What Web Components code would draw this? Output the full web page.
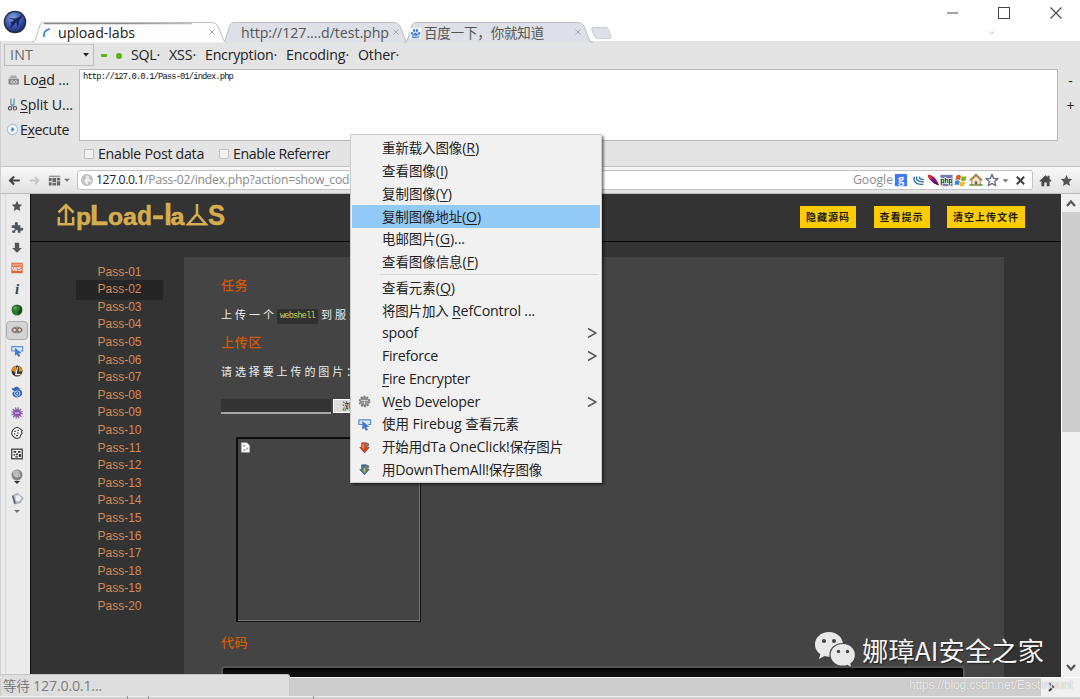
<!DOCTYPE html>
<html lang="zh-CN">
<head>
<meta charset="utf-8">
<title>upload-labs</title>
<style>
html,body{margin:0;padding:0}
body{width:1080px;height:699px;overflow:hidden;background:#fff;color:#222;font:14.2px/18px "Open Sans","Noto Sans CJK SC",sans-serif}
</style>
</head>
<body>
<browser-window></browser-window>
<script>
const CJK=/[\u3000-\u9fff\uff00-\uffef]+/g;
const mix=s=>s.replace(CJK,m=>`<span class="c">${m}</span>`);
const define=(name,html,after)=>customElements.define(name,class extends HTMLElement{
  connectedCallback(){
    if(this.shadowRoot)return;
    const t=document.createElement('template');
    t.innerHTML=typeof html==='function'?html(this):html;
    this.attachShadow({mode:'open'}).append(t.content.cloneNode(true));
    if(after)after(this);
  }
});

/* A label whose tracking is adjusted to a requested width */
define('fit-label',el=>`<style>
:host{display:inline-block;white-space:nowrap;flex:none;width:${el.getAttribute('w')}px}
span{display:inline-block;white-space:pre}
.c{display:inline;font-size:var(--cjk,.95em)}
u{text-decoration-thickness:1px;text-underline-offset:2px}
</style><span id="s">${mix(el.innerHTML)}</span>`,el=>{
  const s=el.shadowRoot.getElementById('s');
  const w=s.getBoundingClientRect().width;
  if(w)s.style.letterSpacing=((+el.getAttribute('w')-w)/s.textContent.length)+'px';
});

const ICONS={
star:'<path fill="#555" d="M8 2l1.800 4 4.200.5-3.100 3 .8 4.300L8 11.700 4.300 13.800l.8-4.300L2 6.500 6.200 6z"/>',
puzzle:'<path fill="#4c5760" d="M2 6h3.500V4.500a1.800 1.800 0 1 1 3.500 0V6h3v3h1a1.600 1.600 0 1 1 0 3h-1v2.500H9V13a1.400 1.400 0 0 0-3 0v1.500H2.500V12H4a1.400 1.400 0 0 0 0-3H2z"/>',
down:'<path fill="#555" d="M5.500 2h5v6H13.500L8 13.500 2.500 8h3z"/>',
ws:'<rect x="1.500" y="2" width="13" height="12" fill="#e0643c"/><path fill="#ee9b7c" d="M2 3h12v3H2z"/><text x="8" y="11" text-anchor="middle" font-family="Liberation Sans" font-weight="bold" font-size="7" fill="#fff">WS</text>',
info:'<text x="8" y="13.500" text-anchor="middle" font-family="Liberation Serif" font-weight="bold" font-style="italic" font-size="17" fill="#34434e">i</text>',
green:'<circle cx="8" cy="8" r="6.300" fill="#2c7a31"/><path d="M7 3c5 0 6 4 3 6s1 3-2 4c6 1 7-7 4-10" fill="#174a1c"/><circle cx="6" cy="6" r="2" fill="#54a354"/>',
mask:'<ellipse cx="8" cy="8" rx="6.500" ry="4" fill="#9c9083"/><circle cx="5.200" cy="8" r="2.200" fill="#ded4c8" stroke="#62564b"/><circle cx="10.800" cy="8" r="2.200" fill="#ded4c8" stroke="#62564b"/>',
bug:'<path d="M6 8H2V3h12.500V8H12" fill="#dbe9fb" stroke="#5b8fd8" stroke-width="1.300"/><path d="M6 5l6.500 5-3 .300 1.800 3.200-1.800.8-1.700-3.300L6 13z" fill="#3b7be0" stroke="#2b58a6" stroke-width=".5"/>',
orange:'<circle cx="8" cy="8" r="6.300" fill="#33302b"/><path d="M2 7.500A6 6 0 0 1 7 2v8z" fill="#e98b22"/><path d="M9.500 2.200A6 6 0 0 1 14 8l-3.500 1z" fill="#e98b22"/><path d="M8 3l1 1-1.300 7H12v1.800H5.500z" fill="#f7efe2"/>',
swirl:'<path d="M2 3c4 2 2-1 6-1 2 0 1 2 4 2-1 2-2 1-3 1 5 0 6 4 4 7-3 3.500-9 2.500-10-1C2 9 4 7 6 7 4 6 2 6 2 3z" fill="#3566b8"/><circle cx="8.300" cy="9.800" r="3" fill="none" stroke="#cfe0fa"/><circle cx="8.300" cy="9.800" r="1.100" fill="#cfe0fa"/>',
virus:'<circle cx="8" cy="8" r="4.600" fill="#8a57ad"/><circle cx="8" cy="8" r="5.600" fill="none" stroke="#8a62ab" stroke-width="2" stroke-dasharray="1.400 1.530"/><path d="M5.500 8h5" stroke="#e0c8ee" stroke-width="1.300"/>',
cookie:'<path d="M11.500 3A6 6 0 1 0 11.500 13l.5-2.500 2-2-1-2 1-1.500z" fill="#f8f8f8" stroke="#3f3f3f" stroke-width="1.200"/><path d="M5 6h2M8.500 5h1.500M4.500 9h1.500M8 8h2M7 11h2" stroke="#333" stroke-width="1.400"/>',
grid:'<rect x="2" y="2.500" width="12" height="11" fill="#fff" stroke="#333" stroke-width="1.400"/><path d="M4 4.500h3v2H4zM9 4.500h3v2H9zM4 8h1.500v2H4zM6.500 7.500h2.500v2H6.500zM10 8h2.500v3.500H10zM6 10.500h3v1.500H6z" fill="#333"/>',
ball:'<circle cx="8" cy="8" r="6.300" fill="#858585"/><ellipse cx="7" cy="5.200" rx="4" ry="2.500" fill="#b8b8b8"/><path d="M4 8h2v2M7 7v3h2V7M11 7v3" stroke="#e4e4e4" fill="none"/>',
eraser:'<path d="M2.500 5L8 2.500 14 7.500 11 12.500l-6.500 1.500z" fill="#b8bcc8" stroke="#9a9eaa" stroke-width=".8"/><path d="M3 5l2.500 8.500" stroke="#555b66" stroke-width="1.500"/><path d="M6 5l4-.5 2 3-2 3.500-4-1z" fill="#eef0f7"/>',
gear:'<circle cx="8" cy="8" r="5" fill="#8c8c8c"/><circle cx="8" cy="8" r="5.400" fill="none" stroke="#777" stroke-width="1.600" stroke-dasharray="2 1.390"/><path d="M4.500 7h7M8 8v3M5.500 9.500h1M10 9.500h1" stroke="#e0e0e0"/>',
dred:'<path fill="#d7401f" stroke="#7e2c1a" stroke-width=".7" d="M5 3h5v5h3l-5 5.500L3 8h2z"/><path fill="#f6a13a" d="M6 4h1.500v6L5 8h1z"/><circle cx="10.800" cy="5" r="2.200" fill="#777"/>',
dblue:'<path fill="#3c7896" stroke="#345264" stroke-width=".7" d="M5 3h5v5h3l-5 5.500L3 8h2z"/><path fill="#d9bb3d" d="M7 6h2v6L6 9h1z"/><circle cx="10.800" cy="5" r="2.200" fill="#777"/>',
paw:'<rect width="16" height="16" rx="1" fill="#fff"/><g fill="#3f7ee8"><ellipse cx="3" cy="7.500" rx="1.700" ry="2.200"/><ellipse cx="6" cy="3.500" rx="1.700" ry="2.400"/><ellipse cx="10.200" cy="3.500" rx="1.700" ry="2.400"/><ellipse cx="13.200" cy="7.500" rx="1.700" ry="2.200"/><path d="M8 6.700c2 0 2.500 2.300 4.300 3.800 1.500 1.500.5 4.500-1.500 4.400H5.200c-2.200 0-3-2.900-1.500-4.400C5.500 9 6 6.700 8 6.700z"/></g><path d="M5.500 11h1.500v2H5.500zM9 10.500V13h2v-2.500" fill="none" stroke="#fff" stroke-width=".9"/>',
google:'<rect x="1" y="1" width="14" height="14" rx="1" fill="#4078f0"/><text x="8" y="11" text-anchor="middle" font-family="Liberation Serif" font-weight="bold" font-size="14" fill="#fff">g</text>',
jq:'<g fill="none" stroke="#2673a8" stroke-width="1.700"><path d="M3 3.500c-2 5 2 10.500 11 9"/><path d="M6 3c-1.500 4 1.500 7.500 8.500 6.500"/><path d="M9.500 3c-.8 2 1 4.200 5 3.600"/></g>',
feather:'<path d="M1 1c6 0 11 5 14 13C9 12.500 2 8 1 1z" fill="#93117b"/><path d="M1 1c3 0 5 2 6 3L4 7C2 5 1 3 1 1z" fill="#d93028"/><path d="M9 8l6 6C10 12.500 8 11 7 10z" fill="#49156b"/>',
php:'<rect x=".5" y="1" width="15" height="14" fill="#777bb3"/><text x="8" y="10.500" text-anchor="middle" font-family="Liberation Sans" font-weight="bold" font-size="8" fill="#111" stroke="#fff" stroke-width="1.600" paint-order="stroke">php</text>',
win:'<path d="M3 2q3-2 5.500 0L7.500 7.500q-3-1.500-6 0z" fill="#dd5a24"/><path d="M9.500 2.500q2.500 1.500 6 .2l-1.500 5.500q-2.500 1-5.600-.3z" fill="#86b32d"/><path d="M1.300 8.500q3-1.500 5.900 0l-1.200 5.300q-2.700-1.800-5.500 0z" fill="#3c83cf"/><path d="M8 9.200q3 1.300 5.800.2l-1.500 5.500q-3 1-5.600-.4z" fill="#f4bd2f"/>',
house:'<path d="M3 8v6h10V8L8 3.500z" fill="#eee5d2" stroke="#9a8761"/><path d="M1 8.500L8 2l7 6.500" fill="none" stroke="#b57b42" stroke-width="1.900"/><path d="M6.500 14V9.500h3V14" fill="#8a6944"/><path d="M.500 13.500h5M10.500 13.500h5" stroke="#68a342" stroke-width="2"/>',
ostar:'<path fill="#fff" stroke="#5c6680" stroke-width="1.400" d="M8 1.800l1.900 4.300 4.700.5-3.500 3.100 1 4.600L8 12l-4.100 2.300 1-4.600-3.500-3.100 4.700-.5z"/>',
close:'<path d="M3.500 3.500l9 9M12.500 3.500l-9 9" stroke="#444" stroke-width="2.600"/>',
home:'<path fill="#4a4a4a" d="M.5 8.500L8 1.500l2.500 2.300V2h2.500v4L15.500 8.500l-1 1L13 8.500V15H9.500v-4.500h-3V15H3V8.500l-1.500 1z"/>',
back:'<path d="M14.500 8H3M7.500 3L2.500 8l5 5" fill="none" stroke="#444" stroke-width="2.600"/>',
fwd:'<path d="M2 8h11M8.500 3.500L13 8l-4.500 4.500" fill="none" stroke="#c4c4c4" stroke-width="2.200"/>',
tiles:'<path d="M1 2h14v2H1z" fill="#999"/><path d="M1 5h3.500v4H1zM5.500 5H10v5H5.500zM11 5h4v3h-4zM1 10h3.500v4H1zM5.500 11H10v3H5.500zM11 9h4v5h-4z" fill="#666"/>',
globe:'<circle cx="8" cy="8" r="6" fill="#eee" stroke="#b9b9b9" stroke-width="1.500"/><path d="M3 4c3-2 5 0 4 2S4 7 5 9s2 2 1 4C3 12 2 8 3 4zM10 3c3 1 4 3 3.500 5C12 9 11 7 10 6zM9 10c2-1 3 0 3 1l-3 2.500z" fill="#c0c0c0"/>',
load:'<path d="M3 6l2-3h6l1.500 3v2H3z" fill="#aaa"/><rect x="2" y="6.500" width="12.500" height="7.500" rx="1" fill="#7c7c7c"/><path d="M2 7h12" stroke="#ddd"/><circle cx="6.300" cy="11" r="1.700" fill="none" stroke="#eee"/><circle cx="10.800" cy="11" r="1.700" fill="none" stroke="#eee"/>',
split:'<path d="M6 1v6.500l3.500 3M10 1v6.500l-3.500 3" stroke="#71a3ae" stroke-width="1.800" fill="none"/><circle cx="5" cy="12.700" r="2.100" fill="none" stroke="#555" stroke-width="1.300"/><circle cx="11" cy="12.700" r="2.100" fill="none" stroke="#555" stroke-width="1.300"/>',
exec:'<circle cx="8" cy="8" r="6.300" fill="#f3f8fd" stroke="#a9c2dc" stroke-width="1.300"/><path d="M6.800 5L10.500 8l-3.700 3z" fill="#2876c9"/>',
broken:'<path d="M2 1h8l4 4v10H2z" fill="#fff" stroke="#aaa"/><path d="M4 4h4v3H4zM9 8h3v3H9zM5 10h3v3H5z" fill="#a5b5a8"/>',
caret:'<path d="M3.500 6h9l-4.500 5z" fill="#777"/>'
};
define('ui-icon',el=>{const s=el.getAttribute('s')||15;return `<style>:host{display:block;flex:none;width:${s}px;height:${s}px}svg{display:block}</style><svg width="${s}" height="${s}" viewBox="0 0 16 16">${ICONS[el.getAttribute('n')]}</svg>`});

define('app-orb',`<style>:host{display:block;width:24px;height:24px}svg{display:block}</style>
<svg width="24" height="24" viewBox="0 0 24 24"><defs><radialGradient id="g" cx=".4" cy=".3" r=".7"><stop offset="0" stop-color="#8aa2e2"/><stop offset=".55" stop-color="#3f5cb8"/><stop offset="1" stop-color="#1b2f78"/></radialGradient></defs><circle cx="12" cy="12" r="11.300" fill="#252c40"/><circle cx="12" cy="12" r="10" fill="url(#g)"/><path d="M5 19C9 16 9 13 7 12c2 0 3-1 4-2-2-1-4-1-5-2 3 0 6 1 8 0s4-2 5-4c0 3-1 5-3 7 0 2 0 4-2 6 0-2 0-4-1-5-1 3-4 5-8 7z" fill="#17275f"/></svg>`);

define('browser-tab',el=>{
  const w=+el.getAttribute('w'),a=el.hasAttribute('active');
  return `<style>
:host{display:flex;position:relative;width:${w}px;height:21px;flex:none;align-items:center;color:${a?'#222':'#555'};z-index:${a?1:0}}
.bg{position:absolute;left:0;top:0}
.in{display:flex;align-items:center;position:relative;width:100%;gap:3px;padding:1px 0 0 var(--lead,0)}
.x{margin:-2px var(--tail,14px) 0 auto;width:6px;height:6px}
</style><svg class="bg" width="${w}" height="21"><path d="M0 20.500Q3 20 4 16L8 3Q9 .5 12 .5H${w-18}Q${w-14} .5 ${w-12} 4L${w-7} 17Q${w-6} 20 ${w-3} 20.500" fill="${a?'#fdfdfd':'#dde0e6'}" stroke="#bcbfc4"/>${a?'<defs><linearGradient id="l"><stop offset=".5" stop-color="#888"/><stop offset="1" stop-color="#888" stop-opacity=".5"/></linearGradient></defs><path d="M12 1h148v1.200H12z" fill="url(#l)"/>':''}</svg>
<div class="in"><slot></slot><svg class="x" viewBox="0 0 6 6"><path d="M.500.500l5 5M5.500.500l-5 5" stroke="#aaa"/></svg></div>`});

define('title-bar',`<style>
:host{display:flex;height:41px;background:#fff;position:relative;z-index:2}
app-orb{margin:10px 0 0 3px}
.tabs{display:flex;margin:22px 0 0 5px}
.new{display:block;margin:5px 0 0 -5px}
browser-tab+browser-tab{margin-left:-8px}
.sys{margin-left:auto;width:141px;display:flex;flex-direction:column}
.b{display:flex;align-items:flex-start;gap:38px;padding:7px 0 0 8px}
.b svg,.sys>svg{display:block}
.sys>svg{margin:12px 0 0 49px}
.spin{width:8px;height:10px;flex:none}
</style>
<app-orb></app-orb>
<div class="tabs">
<browser-tab active w="198" style="--lead:11px;--tail:15px"><svg class="spin" viewBox="0 0 8 10"><path d="M1 9Q0 2 7 1" fill="none" stroke="#2d7bd2" stroke-width="1.600"/></svg><fit-label w="77" style="margin-left:4px">upload-labs</fit-label></browser-tab>
<browser-tab w="190" style="--lead:19px;--tail:13px"><fit-label w="148">http://127....d/test.php</fit-label></browser-tab>
<browser-tab w="192" style="--lead:6px;--tail:15px"><ui-icon n="paw" s="11"></ui-icon><fit-label w="120">百度一下，你就知道</fit-label></browser-tab>
<svg class="new" width="22" height="13"><path d="M2 .5h13q2 0 3 3l2 6q0 2-2 2H7q-3 0-4-3L1 3Q0 .5 2 .5z" fill="#dde0e6" stroke="#c9ccd1"/></svg>
</div>
<div class="sys"><div class="b"><svg width="11" height="12"><path d="M0 6h11" stroke="#444"/></svg><svg width="12" height="12" style="margin-left:2px"><rect x=".5" y=".5" width="11" height="11" fill="none" stroke="#444"/></svg><svg width="12" height="12" style="margin-left:2px"><path d="M.500.500l11 11M11.500.500l-11 11" stroke="#444" stroke-width="1.100"/></svg></div>
<svg width="7" height="4"><path d="M1 .5l2.500 2.500L6 .5" fill="none" stroke="#bbb"/></svg></div>`);

define('hack-bar',`<style>
:host{display:grid;grid-template-rows:27px 73px 25px;height:125px;background:#e4e4e4;border-left:1px solid #cfcfcf;box-sizing:border-box;color:#222}
.m{display:flex;align-items:center;padding-left:3px}
.sel{box-sizing:border-box;width:90px;height:22px;margin-top:1px;border:1px solid #bcbcbc;border-top-color:#ccc;display:flex;align-items:center;justify-content:space-between;padding:0 4px 0 5px;color:#666;background:#e6e6e6}
.g{display:block;margin:2px 0 0 7px}
.m>fit-label{margin:0 0 0 9px}
.mid{display:grid;grid-template-columns:78px 979px 22px}
.l{display:flex;flex-direction:column;margin-top:-1px}
.l div{height:25px;display:flex;align-items:center;padding-left:6px;gap:3px}
.ta{background:#fff;border:1px solid #b9b9b9;box-sizing:border-box;height:72px;margin-top:1px;padding:2px 3px;font:8.800px/11px "Liberation Mono",monospace;color:#111}
.pm{display:grid;grid-template-rows:25px 25px;justify-items:center;align-items:center;padding-left:3px;font-size:14px}
.f{display:flex;align-items:center;padding-left:83px}
.cb{width:10px;height:10px;box-sizing:border-box;border:1px solid #c0c0c0;background:#f2f2f2;border-radius:1px;margin:1px 4px 0 0}
.f fit-label{margin-top:1px}
</style>
<div class="m"><div class="sel"><fit-label w="23">INT</fit-label><svg width="6" height="4"><path d="M0 0h6L3 3.500z" fill="#222"/></svg></div>
<svg class="g" width="22" height="8"><rect x="0" y="2" width="6" height="3" rx="1.300" fill="#54b80f"/><circle cx="18" cy="4" r="3" fill="#54b80f"/></svg>
<fit-label w="29" style="margin-left:8px">SQL·</fit-label><fit-label w="27">XSS·</fit-label><fit-label w="72">Encryption·</fit-label><fit-label w="63">Encoding·</fit-label><fit-label w="41">Other·</fit-label></div>
<div class="mid"><div class="l"><div><ui-icon n="load" s="13"></ui-icon><fit-label w="46">Lo<u>a</u>d ...</fit-label></div><div style="padding-left:5px"><ui-icon n="split" s="13"></ui-icon><fit-label w="53" style="margin-left:-2px"><u>S</u>plit U...</fit-label></div><div style="padding-left:5px"><ui-icon n="exec" s="13"></ui-icon><fit-label w="49" style="margin-left:-2px">E<u>x</u>ecute</fit-label></div></div>
<div class="ta"><fit-label w="150">http://127.0.0.1/Pass-01/index.php</fit-label></div><div class="pm"><span>-</span><span>+</span></div></div>
<div class="f"><span class="cb"></span><fit-label w="106">Enable Post data</fit-label><span class="cb" style="margin-left:15px"></span><fit-label w="97">Enable Referrer</fit-label></div>`);

define('nav-bar',`<style>
:host{display:flex;height:28px;box-sizing:border-box;align-items:center;background:linear-gradient(#f8f8f8,#e2e2e2);border-top:1px solid #c4c4c4;border-bottom:1px solid #bbb;padding:0 6px 0 7px;border-left:1px solid #cfcfcf}
.url{box-sizing:border-box;width:956px;height:20px;margin-left:5px;background:#fff;border:1px solid #c3c3c3;border-radius:3px;display:flex;align-items:center;padding:0 2px;font-size:12.200px;color:#8a8a8a}
.url b{font-weight:400;color:#222}
.r{display:flex;align-items:center;gap:1px;margin-left:auto}
</style>
<ui-icon n="back" s="13"></ui-icon><ui-icon n="fwd" s="13" style="margin-left:7px"></ui-icon><ui-icon n="tiles" s="13" style="margin-left:7px"></ui-icon><ui-icon n="caret" s="10" style="margin-left:1px"></ui-icon>
<div class="url"><ui-icon n="globe" s="14"></ui-icon><b style="margin-left:2px;display:flex"><fit-label w="48">127.0.0.1</fit-label></b><fit-label w="212">/Pass-02/index.php?action=show_code</fit-label>
<div class="r"><fit-label w="40">Google</fit-label><ui-icon n="google" s="14" style="margin-left:0"></ui-icon><ui-icon n="jq" s="13" style="margin-left:3px"></ui-icon><ui-icon n="feather" s="13" style="margin-left:1px"></ui-icon><ui-icon n="php" s="13" style="margin-left:-1px"></ui-icon><ui-icon n="win" s="13"></ui-icon><ui-icon n="house" s="14" style="margin-left:1px"></ui-icon><ui-icon n="ostar" s="14" style="margin-left:1px"></ui-icon><ui-icon n="caret" s="11"></ui-icon><ui-icon n="close" s="13" style="margin:0 3px 0 2px"></ui-icon></div></div>
<ui-icon n="home" s="13" style="margin-left:6px"></ui-icon><ui-icon n="star" s="15" style="margin-left:auto"></ui-icon>`);

define('side-rail',`<style>
:host{display:flex;flex-direction:column;width:30px;box-sizing:border-box;background:#ebebeb;border-left:1px solid #cfcfcf;align-items:center;padding:2px 0 0 3px;position:relative}
:host::before{content:"";width:1px;position:absolute;left:4px;top:0;bottom:0;background:#d8d8d8}
.i{height:20.650px;width:22px;display:flex;align-items:center;justify-content:center;box-sizing:border-box;flex:none}
.on{border:1px solid #aaa;border-radius:4px;background:#d4d4d4;height:19px;margin:1px 0 .65px}
</style>${['star','puzzle','down','ws','info','green','mask','bug','orange','swirl','virus','cookie','grid','ball'].map(n=>`<div class="i${n==='mask'?' on':''}"><ui-icon n="${n}" s="14"></ui-icon></div>`).join('')}
<svg width="6" height="4" style="flex:none;margin-top:-4px"><path d="M0 0h6L3 3z" fill="#333"/></svg>
<div class="i" style="margin-top:3px"><ui-icon n="eraser" s="15"></ui-icon></div><svg width="6" height="4" style="flex:none;margin-top:1px"><path d="M0 0h6L3 3z" fill="#777"/></svg>`);

define('site-logo',`<style>:host{display:block}svg{display:block;overflow:visible}</style>
<svg width="168" height="32" viewBox="0 0 168 32" fill="#d6ad4d"><g fill="none" stroke="#d6ad4d" stroke-width="2.500"><path d="M9 22V3.500M1.500 10.500L9 3l7.500 7.500M1.800 15v7.200h14.400V15"/><path d="M140 2v10L131 22.200h18L140 12"/></g>
<g font-family="Liberation Sans" stroke="#d6ad4d" stroke-width=".5"><text x="19" y="23" font-size="23" textLength="15" lengthAdjust="spacingAndGlyphs">p</text><text x="33" y="23" font-size="29" textLength="18" lengthAdjust="spacingAndGlyphs">L</text><text x="51" y="23" font-size="23" textLength="15" lengthAdjust="spacingAndGlyphs">o</text><text x="66" y="23" font-size="23" textLength="14" lengthAdjust="spacingAndGlyphs">a</text><text x="80" y="23" font-size="28" textLength="15" lengthAdjust="spacingAndGlyphs">d</text><text x="95" y="23" font-size="28" textLength="12" lengthAdjust="spacingAndGlyphs">-</text><text x="107" y="23" font-size="29">l</text><text x="113.500" y="23" font-size="23" textLength="14" lengthAdjust="spacingAndGlyphs">a</text><text x="151" y="23" font-size="29" textLength="17" lengthAdjust="spacingAndGlyphs">S</text></g></svg>`);

define('site-header',`<style>
:host{display:flex;height:48px;box-sizing:border-box;border-bottom:1px solid #080808;background:#333;padding:12px 36px 0 26px;font-size:10px;line-height:22px;color:#1d1d1d;font-weight:600;--cjk:1em}
.b{margin-left:auto;display:flex;gap:17.500px}
.b span{background:#fc0;height:22px;padding:0 6px}
site-logo{margin-top:-4px}
</style><site-logo></site-logo><div class="b"><span><fit-label w="44">隐藏源码</fit-label></span><span><fit-label w="44">查看提示</fit-label></span><span><fit-label w="66">清空上传文件</fit-label></span></div>`);

define('pass-list',`<style>:host{display:block;width:153px;padding-top:21.500px;box-sizing:border-box;font:12px/17.620px "Liberation Sans",sans-serif;color:#d58a57}
div{height:17.620px;padding-left:21.500px;margin:0 21px 0 45px}
.on{background:#252525;box-shadow:0 1px #252525,0 -1px #252525}</style>${Array.from({length:20},(_,i)=>`<div class="${i==1?'on':''}"><fit-label w="44">Pass-${String(i+1).padStart(2,'0')}</fit-label></div>`).join('')}`);

define('lab-panel',`<style>
:host{display:block;width:820px;box-sizing:border-box;margin-top:15px;background:#444;padding:19px 39px 0 37px;color:#eee;font-size:11px;--cjk:1em}
h3{margin:0;font:500 13px/18px "Noto Sans CJK SC",serif;color:#d35a05;height:18px}
p{margin:0;display:flex;height:16px;align-items:center}
code{font:8.500px/14px "Liberation Mono",monospace;background:#303030;color:#d5d256;border-radius:2px;padding:0 3px;height:15px;margin:2px 4px 0 0}
.file{display:flex;height:16px;margin-top:18px;align-items:center}
.file i{width:110px;height:12px;background:#333;border-bottom:2px solid #a5a5a5;border-top:1px solid #333}
.file b{margin-left:2px;width:44px;height:14px;background:#ddd;border:1px solid #fff;box-sizing:border-box;color:#222;font-size:10px;line-height:12px;font-weight:400;padding-left:8px}
.pic{margin:23px 0 0 15px;width:185px;height:185px;box-sizing:border-box;border:1px solid #111;box-shadow:inset 1px 1px #0b0b0b,inset -1px -1px #777;padding:4px 3px}
.code{margin-top:15px;height:10px;border:2px solid #555;border-bottom:0;border-radius:4px 4px 0 0;background:#111;box-shadow:inset 0 2px 2px #000}
</style>
<h3><fit-label w="27">任务</fit-label></h3>
<p style="margin-top:13px"><fit-label w="56">上传一个</fit-label><code><fit-label w="35">webshell</fit-label></code><fit-label w="56" style="margin-left:-1px">到服务器</fit-label></p>
<h3 style="margin-top:10px"><fit-label w="41">上传区</fit-label></h3>
<p style="margin-top:13px"><fit-label w="139">请选择要上传的图片：</fit-label></p>
<div class="file"><i></i><b>浏览...</b></div>
<div class="pic"><ui-icon n="broken" s="11"></ui-icon></div>
<h3 style="margin-top:11px"><fit-label w="27">代码</fit-label></h3>
<div class="code"></div>`);

define('v-scroll',`<style>:host{display:flex;flex-direction:column;width:19px;box-sizing:border-box;border-left:1px solid #fff;background:#f0f0f0;align-items:stretch}
i{height:220px;background:#cdcdcd;margin-bottom:auto}svg{display:block;margin:4px auto}</style>
<svg width="10" height="10"><path d="M1 8l4-4.500L9 8" fill="none" stroke="#555" stroke-width="2.200"/></svg><i></i><svg width="10" height="10"><path d="M1 2l4 4.500L9 2" fill="none" stroke="#555" stroke-width="2.200"/></svg>`);

define('bottom-bar',`<style>:host{display:grid;grid-template-rows:19px 3px;height:22px;position:relative}
.h{display:flex;background:#f0f0f0;border-top:1px solid #fff;box-sizing:border-box}
.h i{width:1041px;height:18px;background:#cdcdcd}.h svg{margin:4px 0 0 5px}
.s{position:absolute;left:1px;top:-3px;width:289px;height:22px;box-sizing:border-box;background:#dedede;border:1px solid #c6c6c6;border-left:0;border-bottom:0;border-radius:0 3px 0 0;color:#7c7c7c;line-height:21px;padding-left:2px}
.t{background:linear-gradient(#eee 1px,#d0d0d0 1px);display:flex}
.t i{width:127px;border-right:1px solid #999}.t i+i{width:20px}.t i+i+i{width:164px}
</style><div class="h"><i></i><svg width="9" height="10"><path d="M3 1l4 4-4 4" fill="none" stroke="#444" stroke-width="2.200"/></svg></div><div class="t"><i></i><i></i><i></i></div>
<div class="s"><fit-label w="99">等待 127.0.0.1...</fit-label></div>`);

define('menu-item',el=>`<style>
:host{display:flex;align-items:center;height:22.750px;padding-right:3px;color:#222}
:host([hot]){background:#91c9f7}
.i{width:30px;display:flex;padding-left:5px;box-sizing:border-box}
svg{margin-left:auto}
</style><div class="i">${el.hasAttribute('icon')?`<ui-icon n="${el.getAttribute('icon')}" s="15"></ui-icon>`:''}</div><fit-label w="${el.getAttribute('w')}">${el.innerHTML}</fit-label>${el.hasAttribute('sub')?'<svg width="10" height="10"><path d="M1 .5l8 4.500L1 9.500" fill="none" stroke="#555" stroke-width="1.500"/></svg>':''}`);

define('context-menu',`<style>
:host{display:block;box-sizing:border-box;width:252px;height:349px;background:#f1f1f1;border:1px solid #ccc;padding:2px 1px;box-shadow:2px 2px 2px #0007;--cjk:.95em}
hr{margin:0 1px 2px 28px;border:0;border-top:1px solid #d7d7d7;height:0}
</style>
<menu-item w="97">重新载入图像(<u>R</u>)</menu-item><menu-item w="66">查看图像(<u>I</u>)</menu-item><menu-item w="70">复制图像(<u>Y</u>)</menu-item><menu-item hot w="99">复制图像地址(<u>O</u>)</menu-item><menu-item w="83">电邮图片(<u>G</u>)...</menu-item><menu-item w="96">查看图像信息(<u>F</u>)</menu-item><hr>
<menu-item w="73">查看元素(<u>Q</u>)</menu-item><menu-item w="153">将图片加入 <u>R</u>efControl ...</menu-item><menu-item sub w="36">spoof</menu-item><menu-item sub w="56">Fireforce</menu-item><menu-item w="88"><u>F</u>ire Encrypter</menu-item><menu-item sub icon="gear" w="98">W<u>e</u>b Developer</menu-item><menu-item icon="bug" w="137">使用 Firebug 查看元素</menu-item><menu-item icon="dred" w="181">开始用dTa OneClick!保存图片</menu-item><menu-item icon="dblue" w="160">用DownThemAll!保存图像</menu-item>`);

define('page-watermark',`<style>:host{display:flex;align-items:center;gap:6px;color:#f4f4f4;font:26.300px/38px "Noto Sans CJK SC",sans-serif;--cjk:1em;text-shadow:1px 1px 1px #222}svg{display:block}</style>
<svg width="42" height="38" viewBox="0 0 42 38"><path fill="#e9e9e9" d="M15 1C7 1 1 6.500 1 13.500c0 4 2 7.500 5.300 9.800L5 28l5.500-3c1.500.5 3 .8 4.500.8 8 0 14-5.500 14-12.300S23 1 15 1z"/><path fill="#e9e9e9" stroke="#444" stroke-width="1.200" d="M29 12.500c-7.500 0-13 5-13 11.300s5.500 11.400 13 11.400c1.500 0 3-.2 4.200-.7l5 2.500-1.300-4.200c3-2.200 4.600-5.300 4.600-9 0-6.300-5.500-11.300-12.500-11.300z"/><g fill="#444"><circle cx="10" cy="10" r="2"/><circle cx="20" cy="10" r="2"/><circle cx="24.500" cy="20.500" r="1.700"/><circle cx="33.500" cy="20.500" r="1.700"/></g></svg><fit-label w="182">娜璋AI安全之家</fit-label>`);

define('browser-window',`<style>
:host{display:grid;grid-template-rows:41px 125px 28px 483px 22px;width:1080px;height:699px;position:relative;overflow:hidden}
.main{display:flex;min-height:0}
.page{flex:1;background:#333;border-left:1px solid #111;box-sizing:border-box;overflow:hidden;display:flex;flex-direction:column}
.cols{display:flex;flex:1;min-height:0}
context-menu{position:absolute;left:350px;top:134px}
page-watermark{position:absolute;left:814px;top:631px}
.link{position:absolute;left:909px;top:676px;font:12px/18px "Liberation Sans",sans-serif;color:#fffc;text-shadow:0 0 1px #999}
</style>
<title-bar></title-bar><hack-bar></hack-bar><nav-bar></nav-bar>
<div class="main"><side-rail></side-rail><div class="page"><site-header></site-header><div class="cols"><pass-list></pass-list><lab-panel></lab-panel></div></div><v-scroll></v-scroll></div>
<bottom-bar></bottom-bar>
<context-menu></context-menu><page-watermark></page-watermark><div class="link"><fit-label w="164">https://blog.csdn.net/Eastmount</fit-label></div>`);
</script>
</body>
</html>
